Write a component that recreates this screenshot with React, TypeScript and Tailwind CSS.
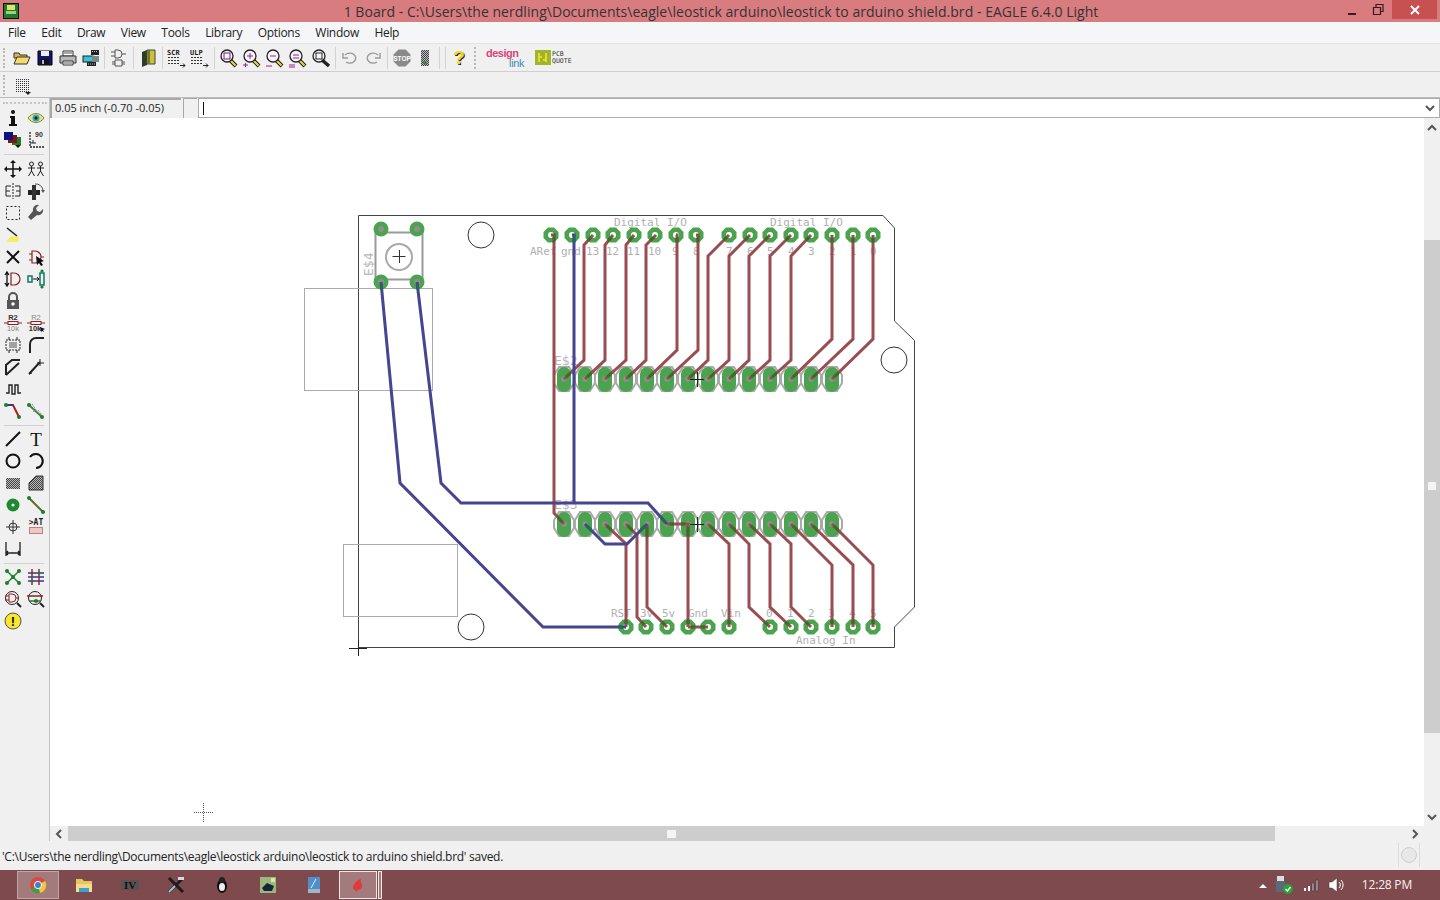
import React from 'react'

const redTraces = [
  'M551 235H554V513L564 524',
  'M593 235L584 245V360L564 379',
  'M613 235L605 245V360L585 379',
  'M634 235L626 245V360L605 379',
  'M656 235L646 245V360L626 379',
  'M676 235H677V350L647 379',
  'M696 235H698V350L667 379',
  'M729 235L708 256V360L688 379',
  'M750 235L729 256V360L708 379',
  'M770 235L749 256V360L729 379',
  'M791 235L770 256V360L749 379',
  'M811 235L791 256V360L770 379',
  'M832 235V339L791 379',
  'M853 235V339L811 379',
  'M873 235V339L832 379',
  'M626 627V544L605 524',
  'M646 627L637 617V535L626 524',
  'M667 627L647 607V524',
  'M688 627V524H667',
  'M688 627H708',
  'M729 627V544L708 524',
  'M770 627L749 607V544L729 524',
  'M791 627L770 607V544L749 524',
  'M811 627L791 607V544L770 524',
  'M832 627V565L791 524',
  'M853 627V565L811 524',
  'M873 627V565L832 524',
]

const blueTraces = [
  'M572 235H574V503',
  'M417 282L441 483L461 503H648L667 524',
  'M381 282L400 483L543 627H626',
  'M585 524L605 544H627L647 524',
]

const longPads = [564, 585, 605, 626, 647, 667, 688, 708, 729, 749, 770, 791, 811, 832]
const topPads = [551, 572, 593, 613, 634, 655, 676, 696, 729, 750, 770, 791, 811, 832, 853, 873]
const bottomPads = [626, 646, 667, 688, 708, 729, 770, 791, 811, 832, 853, 873]
const switchPads = [[381, 229], [417, 229], [381, 282], [417, 282]]

const labels: [string, number, number][] = [
  ['Digital I/O', 614, 226], ['Digital I/O', 770, 226],
  ['ARef', 530, 255], ['gnd', 561, 255], ['13', 586, 255], ['12', 606, 255], ['11', 627, 255], ['10', 648, 255],
  ['9', 672, 255], ['8', 693, 255], ['7', 726, 255], ['6', 747, 255], ['5', 767, 255], ['4', 788, 255],
  ['3', 808, 255], ['2', 829, 255], ['1', 850, 255], ['0', 870, 255],
  ['RST', 611, 617], ['3v', 640, 617], ['5v', 662, 617], ['Gnd', 688, 617], ['Vin', 721, 617],
  ['0', 766, 617], ['1', 787, 617], ['2', 808, 617], ['3', 828, 617], ['4', 849, 617], ['5', 870, 617],
  ['Analog In', 796, 644],
]

const octagon = (x: number, y: number, r: number) => {
  const k = r * 0.41
  return `${x - k},${y - r} ${x + k},${y - r} ${x + r},${y - k} ${x + r},${y + k} ${x + k},${y + r} ${x - k},${y + r} ${x - r},${y + k} ${x - r},${y - k}`
}

const longOutline = (x: number, y: number) =>
  `${x - 5},${y - 12} ${x + 5},${y - 12} ${x + 10},${y - 4} ${x + 10},${y + 4} ${x + 5},${y + 12} ${x - 5},${y + 12} ${x - 10},${y + 4} ${x - 10},${y - 4}`

const PadShapes = ({ fill }: { fill: string }) => (
  <g fill={fill}>
    {longPads.map((x) => (
      <g key={x}>
        <rect x={x - 7} y={367} width={14} height={25} rx={7} />
        <rect x={x - 7} y={512} width={14} height={25} rx={7} />
      </g>
    ))}
    {topPads.map((x) => <polygon key={x} points={octagon(x, 235, 7.5)} />)}
    {bottomPads.map((x) => <polygon key={x} points={octagon(x, 627, 7.5)} />)}
    {switchPads.map(([x, y]) => <circle key={`${x}-${y}`} cx={x} cy={y} r={7.5} />)}
  </g>
)

const Holes = ({ fill, gray }: { fill: string; gray: string }) => (
  <g>
    <g fill={gray}>
      {longPads.map((x) => (
        <g key={x}>
          <circle cx={x} cy={379} r={2.8} />
          <circle cx={x} cy={524} r={2.8} />
        </g>
      ))}
      {switchPads.map(([x, y]) => <circle key={`${x}-${y}`} cx={x} cy={y} r={3} />)}
    </g>
    <g fill={fill}>
      {topPads.map((x) => <circle key={x} cx={x} cy={235} r={3} />)}
      {bottomPads.map((x) => <circle key={x} cx={x} cy={627} r={3} />)}
    </g>
  </g>
)

const Board = () => (
  <svg viewBox="50 118 1374 708" className="block w-[1374px] h-[708px]" fontFamily="'DejaVu Sans Mono', monospace">
    <defs>
      <mask id="padMask" maskUnits="userSpaceOnUse" x="50" y="118" width="1374" height="708">
        <PadShapes fill="#fff" />
        <Holes fill="#000" gray="#000" />
      </mask>
    </defs>
    <path d="M358.5 215.5H883L894.5 228V321L914.5 340.5V607L894.5 627V647.5H358.5Z" fill="none" stroke="#444" strokeWidth="1" />
    <rect x="304.5" y="288.5" width="128" height="102" fill="none" stroke="#aaa" />
    <rect x="343.5" y="544.5" width="114" height="72" fill="none" stroke="#aaa" />
    <circle cx="481" cy="235" r="13" fill="none" stroke="#333" />
    <circle cx="894" cy="360" r="13" fill="none" stroke="#333" />
    <circle cx="471" cy="627" r="13" fill="none" stroke="#333" />
    <g fontSize="11" fill="#b0b0b0">
      {labels.map(([t, x, y]) => <text key={`${t}${x}`} x={x} y={y}>{t}</text>)}
    </g>
    <g fontSize="13" fill="#b8b8b8">
      <text x="554" y="365">E$2</text>
      <text x="554" y="509">E$3</text>
      <text x="0" y="0" transform="translate(373 276) rotate(-90)">E$4</text>
    </g>
    <rect x="375.5" y="232.5" width="47" height="47" fill="none" stroke="#999" strokeWidth="2" />
    <circle cx="399" cy="257" r="13" fill="none" stroke="#aaa" strokeWidth="2" />
    <path d="M392.5 256.5h13M399.5 250v13" stroke="#333" />
    <g fill="none" stroke="#aaa" strokeWidth="2">
      {longPads.map((x) => (
        <g key={x}>
          <polygon points={longOutline(x, 379)} />
          <polygon points={longOutline(x, 524)} />
        </g>
      ))}
    </g>
    <PadShapes fill="#4ca34f" />
    <Holes fill="#fff" gray="#8f8f8f" />
    <g fill="none" strokeWidth="3" strokeLinejoin="miter">
      {redTraces.map((d) => <path key={d} d={d} stroke="#9a4d51" />)}
      {blueTraces.map((d) => <path key={d} d={d} stroke="#454592" />)}
      <g mask="url(#padMask)">
        {redTraces.map((d) => <path key={d} d={d} stroke="#3d6a2d" />)}
        {blueTraces.map((d) => <path key={d} d={d} stroke="#226a54" />)}
      </g>
    </g>
    <path d="M690 379.5h14M697.5 372v15M690 524.5h14M697.5 517v15" stroke="#222" />
    <path d="M349 648.5h18M358.5 640v16" stroke="#222" />
    <path d="M194 812.5h20M203.5 803v20" stroke="#555" strokeDasharray="1 1" />
  </svg>
)

const Ico = ({ children, w = 20 }: { children: React.ReactNode; w?: number }) => (
  <svg width={w} height="20" viewBox={`0 0 ${w} 20`} fontFamily="'Liberation Sans', sans-serif">{children}</svg>
)

const Lens = ({ mark }: { mark?: React.ReactNode }) => (
  <Ico>
    <path d="M11 12l6 6" stroke="#222" strokeWidth="4" />
    <path d="M11.5 12.5l5 5" stroke="#ecd64a" strokeWidth="2" />
    <circle cx="8" cy="8" r="6" fill="#f6f6fa" stroke="#222" strokeWidth="1.3" />
    {mark}
  </Ico>
)

const SmallMark = ({ label }: { label: string }) => (
  <Ico>
    <text x="0" y="7" fontSize="7" fontWeight="700" fill="#222" fontFamily="'DejaVu Sans Mono', monospace">{label}</text>
    <path d="M1 9.5h12M1 12.5h12M1 15.5h12" stroke="#333" strokeDasharray="2 1" />
    <path d="M13 17.5h5M16 15.5l2 2-2 2" stroke="#222" fill="none" />
  </Ico>
)

const topTools: React.ReactNode[] = [
  <Ico><path d="M2 5h5l1 2h7v3H2z" fill="#d8b84a" stroke="#333" /><path d="M2 16l3-7h13l-3 7z" fill="#f2dc6f" stroke="#333" /></Ico>,
  <Ico><path d="M3 3h14v14H3z" fill="#14146e" stroke="#000" /><rect x="6" y="3" width="8" height="5" fill="#eee" /><rect x="6" y="11" width="8" height="6" fill="#111" /><rect x="7" y="12" width="2" height="4" fill="#bbb" /></Ico>,
  <Ico><path d="M5 3h10v5H5z" fill="#fff" stroke="#333" /><path d="M2 8h16v7H2z" fill="#b8b8b8" stroke="#333" /><path d="M5 13h10v4H5z" fill="#fff" stroke="#333" /><path d="M6 5h8M6 15h8" stroke="#555" /></Ico>,
  <Ico><rect x="10" y="2" width="8" height="5" fill="#222" /><rect x="2" y="8" width="10" height="6" fill="#35c4d4" stroke="#222" /><rect x="11" y="8" width="7" height="6" fill="#7a8a8a" /><rect x="6" y="14" width="9" height="4" fill="#222" /><path d="M11 3.5h6M7 16h7" stroke="#ccc" strokeDasharray="1 1" /></Ico>,
  <Ico><path d="M6 2h3a4 4 0 0 1 0 8H6zM2 4h4M2 8h4M13 6h4M6 12h7v6H6zM3 14h3M3 16h3M13 14h3M13 16h3" fill="none" stroke="#555" /></Ico>,
  <Ico><path d="M4 4l5-2v15l-5 2z" fill="#2d3d28" /><path d="M9 2h8v14H9z" fill="#c9c23e" stroke="#443" /><path d="M11 2v14" stroke="#6a7a2a" strokeWidth="2" /></Ico>,
  <SmallMark label="SCR" />,
  <SmallMark label="ULP" />,
  <Lens mark={<rect x="5" y="5" width="6" height="6" fill="none" stroke="#7a1d7a" />} />,
  <Lens mark={<path d="M5 8h6M8 5v6M1 17h5M3.5 15v4" stroke="#a01a90" fill="none" />} />,
  <Lens mark={<path d="M5 8h6M1 18h6" stroke="#a01a90" />} />,
  <Lens mark={<path d="M5 7h6M5 10h6M1 17h6M1 19h6" stroke="#a01a90" />} />,
  <Ico><circle cx="8" cy="8" r="6" fill="#f6f6fa" stroke="#222" strokeWidth="1.3" /><rect x="5" y="5" width="6" height="6" fill="none" stroke="#222" /><path d="M11 12l7 6" stroke="#222" strokeWidth="3.5" /></Ico>,
  <Ico><path d="M5 7a6 5 0 1 1 1 7" fill="none" stroke="#9a9a9a" strokeWidth="1.4" /><path d="M3 5v5h5" fill="none" stroke="#9a9a9a" strokeWidth="1.4" /></Ico>,
  <Ico><path d="M15 7a6 5 0 1 0-1 7" fill="none" stroke="#9a9a9a" strokeWidth="1.4" /><path d="M17 5v5h-5" fill="none" stroke="#9a9a9a" strokeWidth="1.4" /></Ico>,
  <Ico>
    <polygon points={octagon(10, 10, 8.5)} fill="#8a8a8a" />
    <text x="10" y="12.5" textAnchor="middle" fontSize="6.5" fontWeight="700" fill="#fff">STOP</text>
  </Ico>,
  <Ico><rect x="6" y="2" width="8" height="16" fill="url(#hatch)" /><circle cx="10" cy="15" r="1.8" fill="#2f8a3a" /></Ico>,
  <Ico><text x="10" y="17" textAnchor="middle" fontSize="19" fontWeight="700" fill="#222">?</text><text x="9" y="16" textAnchor="middle" fontSize="19" fontWeight="700" fill="#f2d81c">?</text></Ico>,
]

// groups of the top toolbar, a divider sits between each
const topGroups = [[0, 4], [4, 5], [5, 6], [6, 8], [8, 13], [13, 15], [15, 17]]

const Gate = ({ color = '#8c2020' }: { color?: string }) => (
  <path d="M6 4h3a6 6 0 0 1 0 12H6zM3 7h3M3 13h3M15 10h3" fill="none" stroke={color} strokeWidth="1.2" />
)

const hatch = (
  <pattern id="hatch" width="2" height="2" patternUnits="userSpaceOnUse">
    <rect width="2" height="2" fill="#444" />
    <rect width="1" height="1" fill="#bbb" />
    <rect x="1" y="1" width="1" height="1" fill="#bbb" />
  </pattern>
)

const sideGroups: [React.ReactNode, React.ReactNode][][] = [
  [
    [
      <Ico><circle cx="10" cy="4" r="2" fill="#111" /><path d="M7 8h5v8h2v2H6v-2h2v-6H7z" fill="#111" /></Ico>,
      <Ico><path d="M2 10c4-6 12-6 16 0-4 6-12 6-16 0z" fill="#ecdf8c" stroke="#7d8a35" /><circle cx="10" cy="10" r="3.5" fill="#2fa8b8" /><circle cx="10" cy="10" r="1.5" fill="#111" /></Ico>,
    ],
    [
      <Ico><rect x="9" y="7" width="9" height="8" fill="#1f7a2e" /><rect x="5" y="5" width="9" height="8" fill="#7a1616" /><rect x="1" y="2" width="9" height="8" fill="#10107a" /><path d="M12 15h6l-3 3z" fill="#111" /></Ico>,
      <Ico><path d="M4 2v15h14" fill="none" stroke="#222" strokeDasharray="2 1" strokeWidth="1.3" /><path d="M7 10v3M4 13h6" stroke="#222" /><text x="9" y="7" fontSize="7" fontWeight="700" fill="#333">90</text></Ico>,
    ],
  ],
  [
    [
      <Ico><path d="M10 2v16M2 10h16" stroke="#111" strokeWidth="1.5" /><path d="M10 1l3 3H7zM10 19l3-3H7zM1 10l3-3v6zM19 10l-3-3v6z" fill="#111" /></Ico>,
      <Ico><g fill="none" stroke="#222"><circle cx="5.5" cy="5" r="2" /><path d="M5.5 7v5l-3 5M5.5 12l3 5M2 9h7" /><circle cx="14.5" cy="5" r="2" /><path d="M14.5 7v5l-3 5M14.5 12l3 5M11 9h7" /></g></Ico>,
    ],
    [
      <Ico><path d="M8 5H3v10h5M3 10h4M12 5h5v10h-5M17 10h-4" fill="none" stroke="#222" /><path d="M10 2v16" stroke="#222" strokeDasharray="2 1" /></Ico>,
      <Ico><rect x="2" y="9" width="12" height="5" fill="#222" /><rect x="6" y="4" width="4" height="15" fill="#333" /><path d="M9 3a7 7 0 0 1 8 7" fill="none" stroke="#555" /><path d="M15 9h4l-2 3z" fill="#555" /></Ico>,
    ],
    [
      <Ico><rect x="3.5" y="3.5" width="13" height="13" fill="none" stroke="#222" strokeDasharray="2 2" /></Ico>,
      <Ico><path d="M17 6l-3 3-3-1-1-3 3-3a5 5 0 0 0-6 6l-5 6 3 3 6-5a5 5 0 0 0 6-6z" fill="#555" /></Ico>,
    ],
    [<Ico><path d="M4 3l10 8" stroke="#222" strokeWidth="1.6" /><path d="M8 11l8 1-1 5H3z" fill="#f4ee66" /></Ico>, null],
    [
      <Ico><path d="M4 4l12 12M16 4L4 16" stroke="#111" strokeWidth="2" /></Ico>,
      <Ico><Gate /><path d="M10 9l8 5-3 1 2 3-2 1-2-3-2 2z" fill="#111" /></Ico>,
    ],
    [
      <Ico><path d="M4 4v12M2 6l2-3 2 3M2 14l2 3 2-3" fill="none" stroke="#111" strokeWidth="1.3" /><path d="M8 4h3a6 6 0 0 1 0 12H8z" fill="none" stroke="#8c2020" strokeWidth="1.2" /></Ico>,
      <Ico><rect x="2" y="7" width="4" height="6" fill="none" stroke="#176" strokeWidth="1.5" /><rect x="14" y="4" width="4" height="12" fill="none" stroke="#176" strokeWidth="1.5" /><path d="M7 10h6M11 8l2 2-2 2" fill="none" stroke="#111" /><circle cx="16" cy="2" r="1.6" fill="#1f7a2e" /><circle cx="16" cy="18" r="1.6" fill="#1f7a2e" /></Ico>,
    ],
    [
      <Ico><path d="M6 9V6a4 4 0 0 1 8 0v3" fill="none" stroke="#555" strokeWidth="2" /><rect x="4" y="9" width="12" height="9" fill="#555" /><circle cx="10" cy="13" r="1.8" fill="#fff" /></Ico>,
      null,
    ],
    [
      <Ico><text x="10" y="7" textAnchor="middle" fontSize="7.5" fontWeight="700" fill="#333">R2</text><rect x="5" y="8.5" width="10" height="3" fill="none" stroke="#8c2020" /><path d="M1 10h4M15 10h4" stroke="#8c2020" /><text x="10" y="18" textAnchor="middle" fontSize="7.5" fill="#888">10k</text></Ico>,
      <Ico><text x="10" y="7" textAnchor="middle" fontSize="7.5" fill="#888">R2</text><rect x="5" y="8.5" width="10" height="3" fill="none" stroke="#8c2020" /><path d="M1 10h4M15 10h4" stroke="#8c2020" /><text x="9" y="18" textAnchor="middle" fontSize="7.5" fontWeight="700" fill="#333">10k</text><path d="M14 14l5 2-2 1 1 2-2-1-1 1z" fill="#111" /></Ico>,
    ],
    [
      <Ico><rect x="3" y="5" width="14" height="10" fill="none" stroke="#222" strokeDasharray="2 1" /><path d="M6 8h8M6 10h8M6 12h8" stroke="#555" /><path d="M6 2v3M14 2v3M6 15v3M14 15v3" stroke="#222" /></Ico>,
      <Ico><path d="M4 18V9a6 6 0 0 1 6-6h8" fill="none" stroke="#222" strokeWidth="2" /></Ico>,
    ],
    [
      <Ico><path d="M3 18V8l6-5h8M3 18L16 6" fill="none" stroke="#222" strokeWidth="2" /></Ico>,
      <Ico><path d="M3 17L14 5" stroke="#222" strokeWidth="2" /><path d="M14 2v7M11 6h7M3 17l3-1" stroke="#222" /></Ico>,
    ],
    [<Ico><path d="M3 14h3V6h3v9h3V6h3v8h3" fill="none" stroke="#222" strokeWidth="1.4" /></Ico>, null],
    [
      <Ico><path d="M3 4h7l6 12" fill="none" stroke="#b01f1f" strokeWidth="2" /><path d="M3 4h7" stroke="#1f3f9a" strokeWidth="2" /><circle cx="3" cy="4" r="2" fill="#1f7a2e" /><circle cx="16" cy="16" r="2" fill="#1f7a2e" /></Ico>,
      <Ico><path d="M3 4l13 12" stroke="#5a7a3a" strokeWidth="2" /><path d="M6 3l4 6-3 2M12 9l4 5" fill="none" stroke="#3a8aaa" strokeDasharray="1 1" /><circle cx="3" cy="4" r="2" fill="#1f7a2e" /><circle cx="16" cy="16" r="2" fill="#1f7a2e" /></Ico>,
    ],
  ],
  [
    [
      <Ico><path d="M3 17L17 3" stroke="#111" strokeWidth="2" /></Ico>,
      <Ico><text x="10" y="17" textAnchor="middle" fontSize="19" fill="#111" fontFamily="'Liberation Serif', serif">T</text></Ico>,
    ],
    [
      <Ico><circle cx="10" cy="10" r="6.5" fill="none" stroke="#111" strokeWidth="2" /></Ico>,
      <Ico><path d="M4 6a7 7 0 1 1 6 11" fill="none" stroke="#111" strokeWidth="2" /></Ico>,
    ],
    [
      <Ico><defs>{hatch}</defs><rect x="3" y="5" width="14" height="11" fill="url(#hatch)" /></Ico>,
      <Ico><path d="M3 17V10l7-7h7v14z" fill="url(#hatch)" stroke="#333" /></Ico>,
    ],
    [
      <Ico><circle cx="10" cy="10" r="6.5" fill="#1c8a30" /><circle cx="10" cy="10" r="1.6" fill="#fff" /></Ico>,
      <Ico><path d="M3 3l14 14" stroke="#5a6a2a" strokeWidth="2" /><circle cx="3" cy="3" r="2" fill="#1f7a2e" /><circle cx="17" cy="17" r="2" fill="#1f7a2e" /></Ico>,
    ],
    [
      <Ico><circle cx="10" cy="10" r="4" fill="none" stroke="#333" /><path d="M10 3v14M3 10h14" stroke="#333" /></Ico>,
      <Ico><text x="10" y="8" textAnchor="middle" fontSize="8" fontWeight="700" fill="#222" fontFamily="'DejaVu Sans Mono', monospace">&gt;AT</text><rect x="3.5" y="10.5" width="13" height="6" fill="#f0c8c8" stroke="#8c2020" strokeDasharray="1 1" /></Ico>,
    ],
    [<Ico><path d="M3 3v14M17 3v14M3 14h14M5 12l-2 2 2 2M15 12l2 2-2 2" fill="none" stroke="#222" strokeWidth="1.3" /></Ico>, null],
  ],
  [
    [
      <Ico><path d="M4 4l12 12M16 4L4 16" stroke="#1f8a30" strokeWidth="1.5" /><circle cx="4" cy="4" r="2" fill="#1f7a2e" /><circle cx="16" cy="4" r="2" fill="#1f7a2e" /><circle cx="4" cy="16" r="2" fill="#1f7a2e" /><circle cx="16" cy="16" r="2" fill="#1f7a2e" /><circle cx="10" cy="10" r="2" fill="#1f7a2e" /></Ico>,
      <Ico><path d="M2 6h16M2 10h16M2 14h16" stroke="#1f3f9a" strokeWidth="1.5" /><path d="M6 2v16M13 2v16" stroke="#b01f1f" strokeWidth="1.5" /><circle cx="13" cy="6" r="1.5" fill="#1f7a2e" /><circle cx="6" cy="14" r="1.5" fill="#1f7a2e" /></Ico>,
    ],
    [
      <Ico><circle cx="9" cy="9" r="6.5" fill="none" stroke="#222" /><path d="M6 5h3a4 4 0 0 1 0 8H6zM2 7h4M2 11h4M13 9h3" fill="none" stroke="#8c2020" /><path d="M14 14l4 4" stroke="#222" strokeWidth="2" /></Ico>,
      <Ico><circle cx="9" cy="9" r="6.5" fill="none" stroke="#222" /><path d="M1 7h16" stroke="#8c2020" strokeWidth="1.5" /><path d="M3 12h12" stroke="#1f7a2e" strokeWidth="1.5" /><circle cx="10" cy="12" r="2" fill="#1f7a2e" /><path d="M14 14l4 4" stroke="#222" strokeWidth="2" /></Ico>,
    ],
    [
      <Ico><circle cx="10" cy="10" r="8" fill="#f7e52e" stroke="#555" /><text x="10" y="15" textAnchor="middle" fontSize="13" fontWeight="700" fill="#111">!</text></Ico>,
      null,
    ],
  ],
]

const Divider = ({ first }: { first?: boolean }) => (
  <div className={`${first ? 'w-[5px]' : 'w-[6px]'} h-[22px] flex justify-center shrink-0`}><div className="w-px h-full bg-[#d2d2d2]" /></div>
)

const Grip = ({ className }: { className: string }) => (
  <div className={`border-l-2 border-dotted border-[#b8b8b8] ${className}`} />
)

const ToolButton = ({ children }: { children: React.ReactNode }) => (
  <div className="w-[23px] h-[22px] flex items-center justify-center shrink-0">{children}</div>
)

const TopToolbar = () => (
  <div className="h-[28px] flex items-center border-b border-[#cfcfcf] bg-[#f0f0f0] pl-[3px]">
    <Grip className="h-[20px] mr-[5px]" />
    {topGroups.map(([from, to], i) => (
      <React.Fragment key={from}>
        {i > 0 && <Divider first={i === 1} />}
        {topTools.slice(from, to).map((t, j) => <ToolButton key={j}>{t}</ToolButton>)}
      </React.Fragment>
    ))}
    <Divider />
    <Divider />
    <ToolButton>{topTools[17]}</ToolButton>
    <Grip className="h-[22px] ml-[3px] mr-[10px]" />
    <div className="w-[41px] h-[20px] font-['Liberation_Sans',sans-serif]">
      <div className="text-[11px] leading-[10px] font-bold text-[#d6457c] tracking-[-0.5px]">design</div>
      <div className="text-[11px] leading-[10px] text-[#3f8fb0] pl-[23px] tracking-[-0.3px]">link</div>
    </div>
    <div className="ml-[8px] w-[16px] h-[15px] bg-[#9fb52a] flex items-center justify-center">
      <svg width="14" height="13" viewBox="0 0 14 13"><path d="M3 2v9M3 6h3M10 2v9M7 9h3" stroke="#f6e13a" strokeWidth="1.6" /></svg>
    </div>
    <div className="ml-[1px] text-[6.5px] leading-[7px] text-[#333] font-['DejaVu_Sans_Mono',monospace]">PCB<br />QUOTE</div>
  </div>
)

const SecondToolbar = () => (
  <div className="h-[26px] flex items-center border-b border-[#bdbdbd] bg-[#f0f0f0] pl-[3px]">
    <Grip className="h-[20px] mr-[5px]" />
    <ToolButton>
      <Ico>
        {[4, 6, 8, 10, 12, 14, 16].map((y) => (
          <path key={y} d={`M4 ${y + 0.5}h13`} stroke="#333" strokeDasharray="1 1" />
        ))}
        <path d="M13 17h6l-3 3z" fill="#222" />
      </Ico>
    </ToolButton>
  </div>
)

const SideBar = () => (
  <div className="w-[50px] shrink-0 border-r border-[#c4c4c4] bg-[#f0f0f0] flex flex-col pl-[1px]">
    <div className="h-[9px] mx-[2px] pt-[4px]"><div className="border-t-2 border-dotted border-[#c4c4c4]" /></div>
    {sideGroups.map((group, i) => (
      <div key={i}>
        {i > 0 && (
          <div className={`${i === 1 ? 'h-[7px]' : 'h-[6px]'} pt-[3px] pr-[5px] pl-[3px]`}><div className="h-px bg-[#d2d2d2]" /></div>
        )}
        {group.map((row, j) => (
          <div key={j} className="grid grid-cols-[23px_23px] h-[22px]">
            <div className="flex items-center justify-center">{row[0]}</div>
            <div className="flex items-center justify-center">{row[1]}</div>
          </div>
        ))}
      </div>
    ))}
  </div>
)

const Arrow = ({ d }: { d: string }) => (
  <svg width="10" height="10" viewBox="0 0 10 10"><path d={d} fill="none" stroke="#555" strokeWidth="2" /></svg>
)

const CommandRow = () => (
  <div className="h-[20px] flex items-stretch bg-[#f0f0f0]">
    <div className="w-[131px] border-l-2 border-t-2 border-[#a8a8a8] pl-[3px] text-[11px] leading-[16px] text-[#222]">0.05 inch (-0.70 -0.05)</div>
    <div className="ml-[2px] w-[14px] border-l border-t border-[#a8a8a8]" />
    <div className="ml-px flex-1 flex items-center bg-white border border-[#ababab] pl-[4px] pr-[4px]">
      <div className="w-px h-[13px] bg-[#111]" />
      <div className="flex-1" />
      <Arrow d="M1 3l4 4 4-4" />
    </div>
  </div>
)

const VScroll = () => (
  <div className="w-[16px] shrink-0 bg-[#f0f0f0] flex flex-col items-center">
    <div className="h-[19px] flex items-center justify-center"><Arrow d="M1 7l4-4 4 4" /></div>
    <div className="h-[103px]" />
    <div className="w-full h-[493px] bg-[#cdcdcd] flex items-center justify-center">
      <div className="w-[8px] h-[8px] bg-[#f4f4f4] -mt-[2px]" />
    </div>
    <div className="flex-1" />
    <div className="h-[19px] flex items-center justify-center"><Arrow d="M1 3l4 4 4-4" /></div>
  </div>
)

const HScroll = () => (
  <div className="h-[15px] flex items-center bg-[#f0f0f0] mr-[16px]">
    <div className="w-[18px] flex items-center justify-center"><Arrow d="M7 1L3 5l4 4" /></div>
    <div className="w-[1207px] h-full bg-[#cdcdcd] flex items-center justify-center">
      <div className="w-[9px] h-[8px] bg-[#f4f4f4]" />
    </div>
    <div className="flex-1" />
    <div className="w-[18px] flex items-center justify-center"><Arrow d="M3 1l4 4-4 4" /></div>
  </div>
)

const StatusBar = () => (
  <div className="h-[29px] flex items-center bg-[#f0f0f0] pl-[2px] text-[12px] text-[#222] tracking-[-0.27px]">
    <span className="pt-[2px]">'C:\Users\the nerdling\Documents\eagle\leostick arduino\leostick to arduino shield.brd' saved.</span>
    <div className="flex-1" />
    <div className="w-[22px] h-[24px] mt-[-1px] mr-[20px] border-x border-[#dcdcdc] flex items-center justify-center">
      <div className="w-[16px] h-[16px] rounded-full bg-[#e8e8e8] border border-[#cfcfcf]" />
    </div>
  </div>
)

const taskItems: React.ReactNode[] = [
  <Ico><circle cx="10" cy="10" r="8" fill="#d94a3a" /><path d="M10 10L3 14a8 8 0 0 0 9 4z" fill="#3f9f45" /><path d="M10 10l7-4a8 8 0 0 1-5 12z" fill="#efc93a" /><circle cx="10" cy="10" r="3.6" fill="#3d7fd6" stroke="#fff" /></Ico>,
  <Ico><path d="M2 4h6l2 2h8v11H2z" fill="#e9c65c" /><path d="M2 9h16v8H2z" fill="#f4dc8a" /><path d="M5 13h10v4H5z" fill="#3e9fd1" /></Ico>,
  <Ico><rect x="1" y="5" width="18" height="10" fill="#595152" /><text x="10" y="14" textAnchor="middle" fontSize="11" fontWeight="700" fill="#111" fontFamily="'Liberation Serif', serif">IV</text></Ico>,
  <Ico><path d="M3 3l14 14M17 3L3 17" stroke="#1c1c1c" strokeWidth="3" /><path d="M3 17l6-6" stroke="#9fc6de" strokeWidth="2" /><rect x="12" y="2" width="6" height="3" fill="#d8d8d8" /></Ico>,
  <Ico><ellipse cx="10" cy="11" rx="5" ry="7" fill="#111" /><ellipse cx="10" cy="12" rx="3" ry="4" fill="#eee" /><circle cx="10" cy="5" r="3" fill="#222" /></Ico>,
  <Ico><rect x="2" y="2" width="16" height="16" fill="#9bb87a" /><path d="M4 13l5-5 7 3-2 5H6z" fill="#15263a" /><rect x="13" y="3" width="4" height="4" fill="#d8e8a0" /></Ico>,
  <Ico><rect x="4" y="2" width="12" height="16" fill="#4f8fca" /><rect x="4" y="14" width="12" height="4" fill="#a3b6c2" /><path d="M7 13l5-9" stroke="#e8f0f8" /></Ico>,
  <Ico><path d="M5 14c0-4 3-9 8-10-1 2 0 3 1 5 1 3-1 6-4 6l-2 2-1-2z" fill="#e23a3a" /></Ico>,
]

const Taskbar = () => (
  <div className="h-[30px] flex items-center bg-[#7f4a4d] text-white">
    <div className="w-[17px]" />
    <div className="w-[42px] h-[28px] flex items-center justify-center bg-[#a47b7d] border border-[#c2a5a6]">{taskItems[0]}</div>
    <div className="w-[2px]" />
    {taskItems.slice(1, 7).map((t, i) => (
      <div key={i} className="w-[46px] h-[28px] flex items-center justify-center">{t}</div>
    ))}
    <div className="w-[2px]" />
    <div className="w-[38px] h-[28px] flex items-center justify-center bg-[#a47b7d] border border-[#f0e6e6]">{taskItems[7]}</div>
    <div className="w-[4px] h-[28px] ml-px bg-[#a47b7d] border border-[#f0e6e6]" />
    <div className="flex-1" />
    <svg width="8" height="5" viewBox="0 0 8 5" className="mr-[8px]"><path d="M0 5l4-4 4 4z" fill="#fff" /></svg>
    <div className="mr-[7px]">
      <Ico>
        <rect x="2" y="1" width="7" height="5" fill="#ddd" />
        <rect x="1" y="6" width="9" height="11" fill="#5b6a78" />
        <circle cx="13" cy="14" r="5" fill="#2ba137" />
        <path d="M10.5 14l2 2 3-4" stroke="#fff" strokeWidth="1.4" fill="none" />
      </Ico>
    </div>
    <div className="mr-[4px]">
      <Ico><path d="M2 13h2v3H2zM6 11h2v5H6z" fill="#fff" /><path d="M10 8h2v8h-2zM14 5h2v11h-2z" fill="#b7a4a5" stroke="#333" strokeWidth="0.5" /></Ico>
    </div>
    <div className="mr-[16px]">
      <Ico><path d="M3 7h3l5-4v14l-5-4H3z" fill="#fff" stroke="#333" strokeWidth="0.5" /><path d="M13 7a4 4 0 0 1 0 6M15 5a7 7 0 0 1 0 10" fill="none" stroke="#fff" /></Ico>
    </div>
    <div className="mr-[28px] text-[12px] tracking-[-0.2px] text-[#f8f2f2]">12:28 PM</div>
  </div>
)

const menus = ['File', 'Edit', 'Draw', 'View', 'Tools', 'Library', 'Options', 'Window', 'Help']

const App = () => (
  <div className="w-[1440px] h-[900px] flex flex-col overflow-hidden bg-[#f0f0f0] font-['Open_Sans',sans-serif]">
    <div className="h-[22px] flex items-center bg-[#d97c80] text-[#333]">
      <div className="w-[16px] h-[16px] ml-[3px] bg-[#1f7a2a] border border-[#111] flex flex-col items-center justify-start">
        <div className="w-[8px] h-[5px] mt-px bg-[#e3e36a]" />
        <div className="w-[10px] h-[3px] mt-px bg-[#9ad18a]" />
      </div>
      <div className="flex-1 text-center text-[14px] pl-[79px] tracking-[0.04px]">1 Board - C:\Users\the nerdling\Documents\eagle\leostick arduino\leostick to arduino shield.brd - EAGLE 6.4.0 Light</div>
      <svg width="20" height="20" viewBox="0 0 20 20"><path d="M4 13h8" stroke="#3a1a1c" strokeWidth="2" /></svg>
      <svg width="20" height="20" viewBox="0 0 20 20" className="ml-[6px]"><path d="M3.5 6.5h7v7h-7zM6 6V3.5h7v7h-2" fill="none" stroke="#3a1a1c" strokeWidth="1.2" /></svg>
      <div className="w-[45px] h-[19px] self-start ml-[2px] mr-[3px] bg-[#c75050] flex items-center justify-center">
        <svg width="10" height="10" viewBox="0 0 10 10"><path d="M1 1l8 8M9 1L1 9" stroke="#fff" strokeWidth="2" /></svg>
      </div>
    </div>
    <div className="h-[22px] flex items-center gap-[15.5px] pl-[8px] bg-[#f5f6f7] border-b border-[#e4e4e4] text-[12px] tracking-[-0.3px] text-[#222]">
      {menus.map((m) => <span key={m}>{m}</span>)}
    </div>
    <TopToolbar />
    <SecondToolbar />
    <div className="flex-1 flex min-h-0">
      <SideBar />
      <div className="flex-1 flex flex-col min-w-0">
        <CommandRow />
        <div className="flex-1 flex min-h-0">
          <div className="flex-1 bg-white overflow-hidden"><Board /></div>
          <VScroll />
        </div>
        <HScroll />
      </div>
    </div>
    <StatusBar />
    <Taskbar />
  </div>
)

export default App
